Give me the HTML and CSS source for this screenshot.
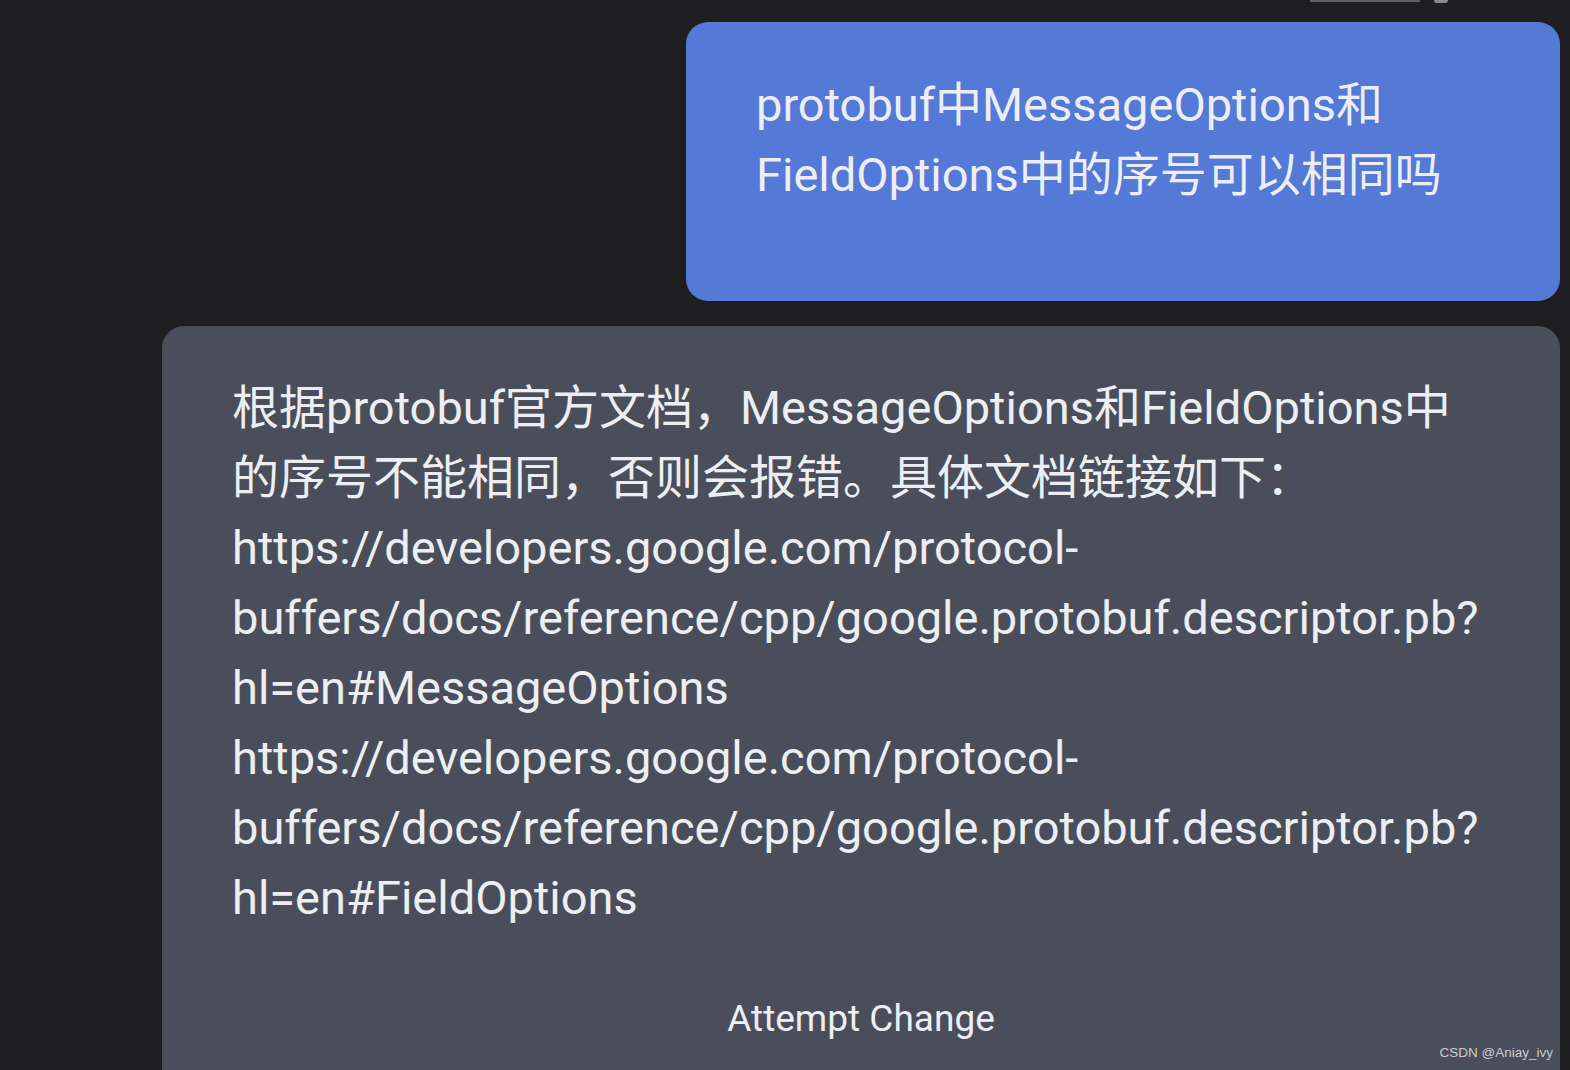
FILE: index.html
```html
<!DOCTYPE html>
<html lang="zh-CN">
<head>
<meta charset="utf-8">
<title>Chat</title>
<link rel="stylesheet" href="styles.css">
</head>
<body>
<div class="topline"><span class="seg"></span><span class="dot"></span></div>
<main class="chat">
  <div class="bubble user">
    <p class="msg">protobuf中MessageOptions和<br>FieldOptions中的序号可以相同吗</p>
  </div>
  <div class="bubble bot">
    <p class="msg">根据protobuf官方文档，MessageOptions和FieldOptions中<br>的序号不能相同，否则会报错。具体文档链接如下：<br>https://developers.google.com/protocol-<br>buffers/docs/reference/cpp/google.protobuf.descriptor.pb?<br>hl=en#MessageOptions<br>https://developers.google.com/protocol-<br>buffers/docs/reference/cpp/google.protobuf.descriptor.pb?<br>hl=en#FieldOptions</p>
    <div class="action">Attempt Change</div>
  </div>
</main>
<div class="watermark">CSDN @Aniay_ivy</div>
</body>
</html>
```
FILE: styles.css
```css
html, body {
  margin: 0;
  padding: 0;
  background: #1e1e20;
  height: 1070px;
  overflow: hidden;
}
body {
  font-family: Roboto, "Noto Sans CJK SC", sans-serif;
  color: #eceef3;
  position: relative;
}
.topline {
  position: absolute;
  top: 0;
  left: 1310px;
  height: 2px;
  display: flex;
  gap: 14px;
}
.topline .seg {
  width: 110px;
  height: 2px;
  background: #5e5e63;
}
.topline .dot {
  width: 14px;
  height: 3px;
  background: #8a8a90;
  border-radius: 0 0 6px 6px;
}
.chat {
  display: flex;
  flex-direction: column;
  align-items: flex-end;
  gap: 25px;
  padding: 22px 10px 0 0;
}
.bubble {
  box-sizing: border-box;
  border-radius: 22px;
}
.user {
  width: 874px;
  height: 279px;
  background: #5479d6;
  padding: 48px 0 0 70px;
}
.bot {
  width: 1398px;
  height: 760px;
  background: #4a4e5a;
  padding: 47px 0 0 70px;
  border-radius: 22px 22px 0 0;
}
.msg {
  margin: 0;
  font-size: 47px;
  line-height: 70px;
  white-space: nowrap;
}
.action {
  margin-top: 66px;
  padding-right: 70px;
  text-align: center;
  font-size: 37px;
  line-height: 40px;
}
.watermark {
  position: absolute;
  right: 17px;
  bottom: 10px;
  font-family: "Liberation Sans", Arial, sans-serif;
  font-size: 13.5px;
  color: #c9cbd1;
}
```
